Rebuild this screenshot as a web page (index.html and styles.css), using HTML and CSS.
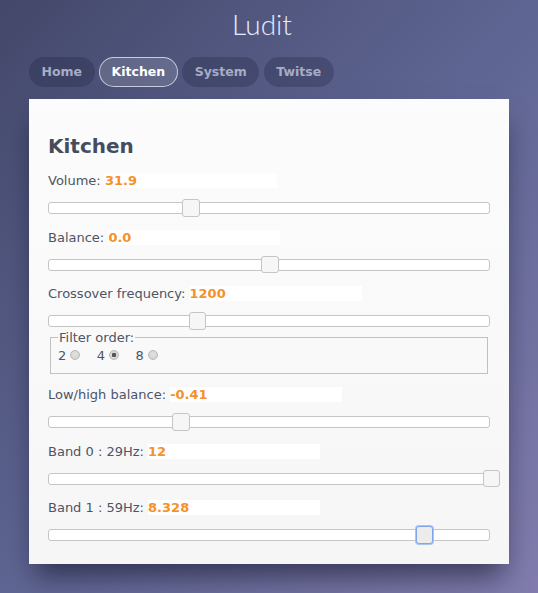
FILE: index.html
```html
<!DOCTYPE html>
<html>
<head>
<meta charset="utf-8">
<link rel="stylesheet" href="styles.css">
</head>
<body>
<div class="wrap">
  <h1 class="title">Ludit</h1>
  <nav class="tabs">
    <span class="tab">Home</span>
    <span class="tab active">Kitchen</span>
    <span class="tab">System</span>
    <span class="tab">Twitse</span>
  </nav>
  <main class="card">
    <h2 class="heading">Kitchen</h2>

    <div class="label">Volume: <span class="value">31.9</span></div>
    <div class="slider"><span class="handle" style="left:32.1%"></span></div>

    <div class="label">Balance: <span class="value">0.0</span></div>
    <div class="slider"><span class="handle" style="left:50%"></span></div>

    <div class="label">Crossover frequency: <span class="value">1200</span></div>
    <div class="slider slider-tight"><span class="handle" style="left:33.5%"></span></div>

    <fieldset class="filter">
      <legend>Filter order:</legend>
      <div class="radios">
        <label class="opt">2<span class="radio"></span></label>
        <label class="opt">4<span class="radio checked"></span></label>
        <label class="opt">8<span class="radio"></span></label>
      </div>
    </fieldset>

    <div class="label">Low/high balance: <span class="value">-0.41</span></div>
    <div class="slider"><span class="handle" style="left:29.8%"></span></div>

    <div class="label">Band 0 : 29Hz: <span class="value">12</span></div>
    <div class="slider"><span class="handle" style="left:100.3%"></span></div>

    <div class="label">Band 1 : 59Hz: <span class="value">8.328</span></div>
    <div class="slider last"><span class="handle focus" style="left:85.1%"></span></div>
  </main>
</div>
</body>
</html>
```
FILE: styles.css
```css
html {
  min-height: 100%;
  background: linear-gradient(to bottom right, #43486a 0%, #5e6592 50%, #817cad 100%);
}
body {
  margin: 0;
  min-height: 593px;
  font-family: "DejaVu Sans", "Liberation Sans", sans-serif;
}
.wrap {
  width: 480px;
  margin: 0 auto;
  padding-top: 7px;
}
.title {
  margin: 0;
  padding-right: 14px;
  text-align: center;
  font-family: "Lato", "Open Sans", sans-serif;
  font-weight: 300;
  font-size: 28px;
  line-height: 34px;
  color: #e4ebff;
}
.tabs {
  display: flex;
  gap: 4.5px;
  margin-top: 16px;
}
.tab {
  box-sizing: border-box;
  height: 30px;
  line-height: 28px;
  padding: 0 11.5px;
  border: 1px solid transparent;
  border-radius: 15px;
  background: rgba(28, 32, 60, 0.28);
  color: #a7abc6;
  font-weight: bold;
  font-size: 12.5px;
}
.tab.active {
  background: rgba(255, 255, 255, 0.13);
  border-color: rgba(235, 238, 250, 0.75);
  color: #ffffff;
}
.card {
  display: block;
  margin-top: 12px;
  padding: 35px 19px 23px 19px;
  background: linear-gradient(#fcfcfc, #f6f6f6);
  box-shadow: 0 18px 26px -6px rgba(10, 10, 30, 0.55);
}
.heading {
  margin: 0 0 15px 0;
  font-size: 20px;
  font-weight: bold;
  color: #474c5d;
}
.label {
  font-size: 13px;
  line-height: 15px;
  color: #4d5466;
  margin-bottom: 14px;
}
.value {
  display: inline-block;
  width: 172px;
  background: #ffffff;
  color: #f4912b;
  font-weight: bold;
}
.slider {
  position: relative;
  height: 10px;
  border: 1px solid #c5c5c5;
  border-radius: 3px;
  background: #ffffff;
  margin-bottom: 15.5px;
}
.slider-tight {
  margin-bottom: 3px;
}
.slider.last {
  margin-bottom: 0;
}
.handle {
  position: absolute;
  top: -4px;
  width: 15.6px;
  height: 15.6px;
  margin-left: -7.8px;
  border: 1px solid #c5c5c5;
  border-radius: 3px;
  background: #f6f6f6;
}
.handle.focus {
  background: #ececec;
  border-color: #7ea6ec;
  box-shadow: 0 0 0 1px #a8c4f3;
}
.filter {
  margin: 0 2px 13px 2px;
  padding: 3px 6px 10px 7px;
  border: 1px solid #c0c0c0;
  font-size: 13px;
  line-height: 15px;
  color: #4d5466;
}
.filter legend {
  padding: 0 1px;
  margin-left: 0;
}
.radios {
  display: flex;
}
.opt {
  display: flex;
  align-items: center;
}
.radio {
  box-sizing: border-box;
  width: 10px;
  height: 10px;
  margin: 0 16.5px 1px 4px;
  border: 1px solid #b9b9b9;
  border-radius: 50%;
  background: radial-gradient(circle at 50% 40%, #e2e2e2, #cfcfcf);
}
.radio.checked {
  background: radial-gradient(circle, #555 0, #555 2px, #d9d9d9 2.5px, #cfcfcf 100%);
}
```
